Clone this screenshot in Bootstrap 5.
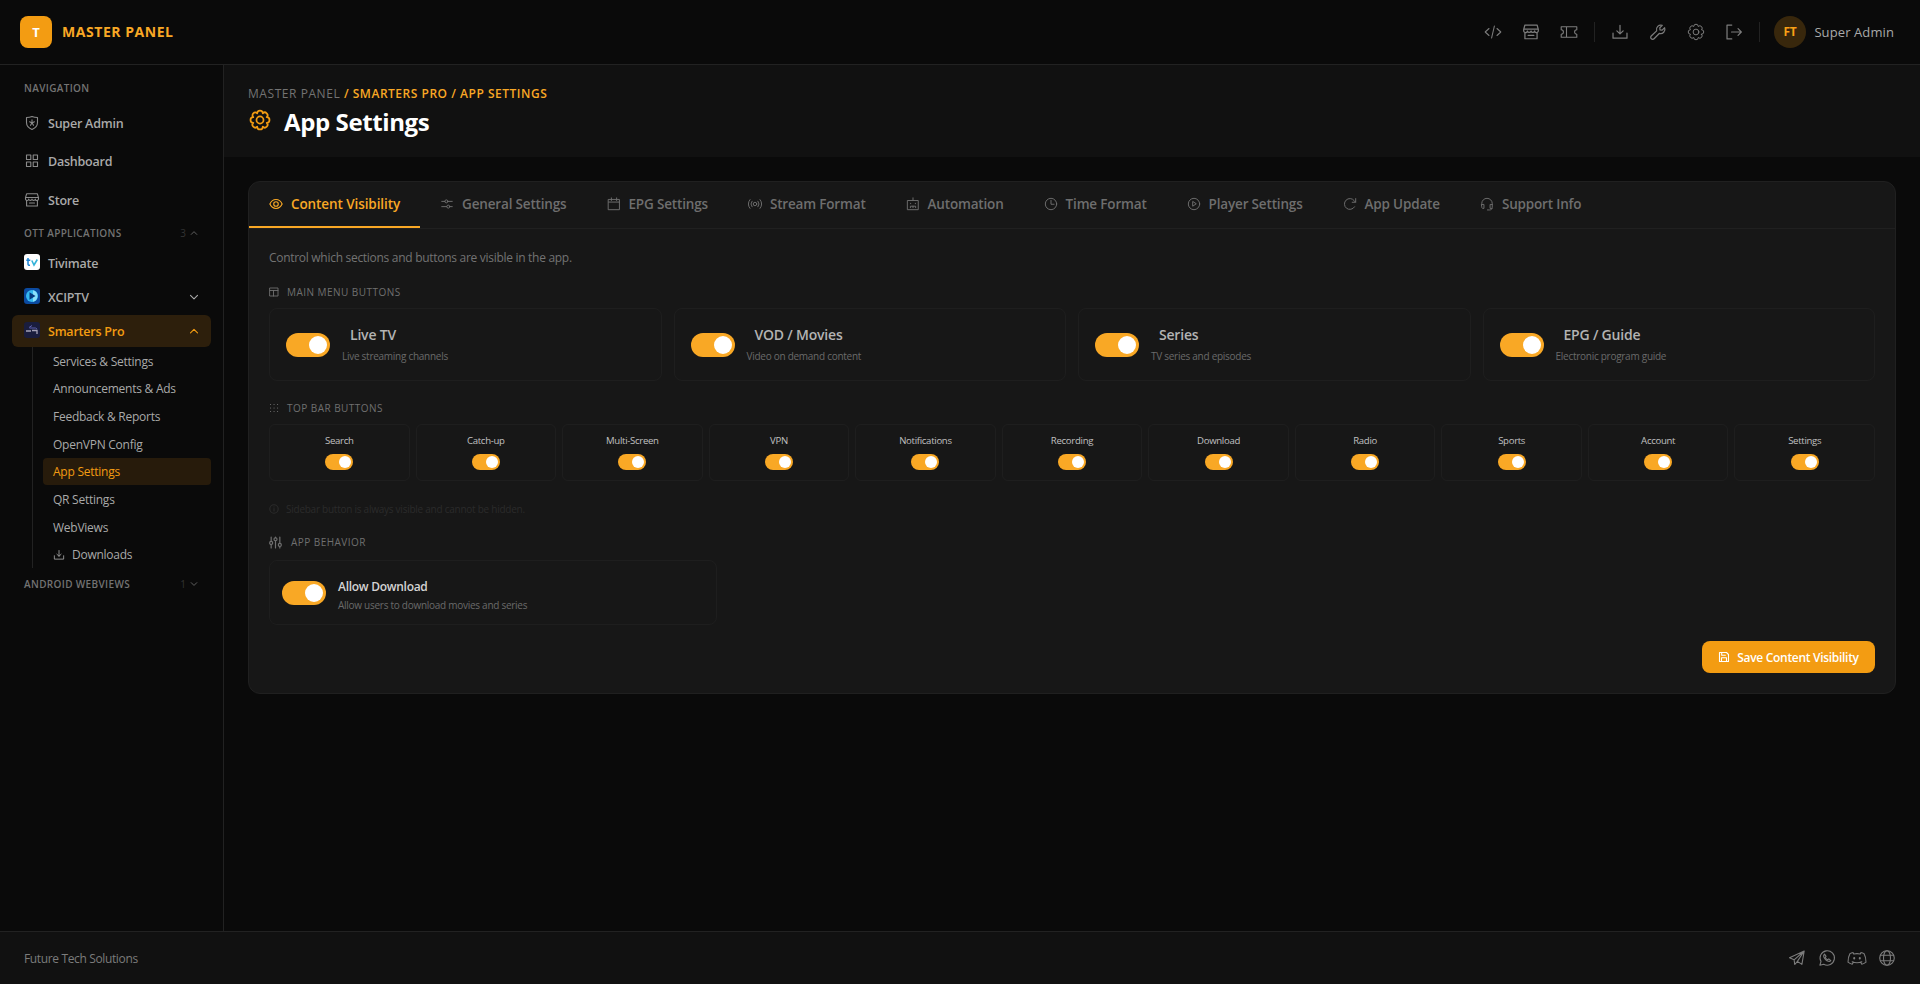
<!DOCTYPE html>
<html lang="en" data-bs-theme="dark">
<head>
<meta charset="utf-8">
<title>App Settings</title>
<link href="https://cdn.jsdelivr.net/npm/bootstrap@5.3.0/dist/css/bootstrap.min.css" rel="stylesheet">
<style>
body{background:#0a0a0a;color:#a9a9a9;font-family:"Open Sans","Noto Sans",sans-serif;font-size:13px;line-height:20px;height:984px;overflow:hidden}
a{color:inherit;text-decoration:none}
svg.ic{width:16px;height:16px;flex:none;fill:none;stroke:currentColor;stroke-width:1.1;stroke-linecap:round;stroke-linejoin:round}
.topbar{height:65px;border-bottom:1px solid #222;padding:0 26px 0 20px}
.logo{width:32px;height:32px;border-radius:8px;background:#f39c12;color:#fff;font-weight:700;font-size:13px}
.brand{font-weight:700;font-size:14px;color:#f9a825;margin-left:10px;letter-spacing:.55px}
.who{letter-spacing:.1px}
.tools{color:#7c7c7c}
.tools .ic{width:18px;height:18px;margin-right:20px}
.vr-line{width:1px;height:20px;background:#222}
.avatar{width:32px;height:32px;border-radius:50%;background:#38270c;color:#f9a016;font-weight:700;font-size:12px;letter-spacing:-.4px;margin:0 8px 0 14px;padding-right:1px}
.side{width:224px;border-right:1px solid #222;padding:0 12px;flex:none}
.head{font-size:10px;font-weight:600;color:#737373;letter-spacing:.35px;padding:0 12px}
.head .ic{width:8px;height:8px;margin:0 1px 0 4px;color:#6b6b6b}
.head .cnt{color:#333;font-weight:400;letter-spacing:0}
.nav-row{height:38.5px;padding:1px 12px 0;font-weight:600;gap:8px;font-size:12.5px;letter-spacing:-.22px}
.nav-row .ic{color:#8a8a8a;position:relative;top:-1px}
.app-row{height:32px;margin-bottom:2px;padding:2px 12px 0;font-weight:600;border-radius:6px;font-size:12.5px;letter-spacing:-.22px}
.app-row .chev{width:10px;height:10px;position:relative;top:-1px}
.app-row.on{background:#2d1f0c;color:#f39c12;margin:0}
.app-icon{width:16px;height:16px;margin-right:8px;flex:none;position:relative;top:-2px}
.sub{margin-left:20px;border-left:1px solid #222;padding-left:10px;width:179px}
.sub a{display:flex;align-items:center;height:27.625px;padding:2px 0 0 10px;font-size:12px;letter-spacing:-.25px;color:#868686;border-radius:4px}
.sub a.on{background:#271b0b;color:#f39c12}
.page-head{background:#111;height:92px;padding:0 24px}
.crumb{font-size:12px;font-weight:600;color:#f9a825;padding-top:19px;height:38px;line-height:20px;letter-spacing:.52px}
.crumb span{color:#737373;font-weight:400;letter-spacing:.56px}
h1{font-size:24px;font-weight:700;color:#fff;line-height:32px;margin:0 0 0 13px;letter-spacing:-.4px}
.page-title .ic{width:22px;height:22px;color:#f39c12;position:relative;top:-2px;margin-left:1px;stroke-width:1.6}
.panel{margin:24px 24px 0;height:513px;background:#171717;border:1px solid #202020;border-radius:12px;overflow:hidden}
.tabs{height:47px;border-bottom:1px solid #202020;font-size:13.5px;font-weight:600;color:#6e6e6e;letter-spacing:-.17px}
.tabs a{display:flex;align-items:center;height:46px;padding:0 20px;gap:8px;border-bottom:2px solid transparent}
.tabs a.on{color:#f9a825;border-color:#f9a825;letter-spacing:-.09px}
.tabs .ic{width:14px;height:14px}
.panel-body{padding:19px 20px 0}
.desc{font-size:12px;letter-spacing:-.29px;color:#737373;height:19px}
.sec{font-size:10px;line-height:14px;color:#6f6f6f;letter-spacing:.46px;gap:8px;font-weight:500}
.sec .ic{width:10px;height:10px}
.g4{display:grid;grid-template-columns:repeat(4,1fr);gap:12px}
.g11{display:grid;grid-template-columns:repeat(11,1fr);gap:6px}
.box{border:1px solid #1e1e1e;border-radius:8px}
.g4 .box{height:73px;padding:0 16px}
.tg{width:44px;height:24px;border-radius:12px;background:#f9a825;padding:3px;display:flex;justify-content:flex-end;flex:none}
.tg::after{content:"";width:18px;height:18px;border-radius:50%;background:#fff}
.tg.mini{width:28px;height:16px;padding:2px}
.tg.mini::after{width:12px;height:12px}
.lbl{font-size:14px;font-weight:600;color:#b3b3b3;line-height:20px;letter-spacing:-.2px}
.hint{font-size:10px;letter-spacing:-.27px;color:#6a6a6a;line-height:16px;margin-top:3px}
.g11 .box{height:57px;padding-top:8px;gap:5px;border-radius:6px;font-size:9.6px;font-weight:500;letter-spacing:-.3px;line-height:16px;color:#c0c0c0}
.note{font-size:10px;letter-spacing:-.25px;color:#2b2b2b;line-height:16px;gap:7px}
.low .lbl{font-size:12px;letter-spacing:-.28px;color:#d4d4d4;line-height:18px}
.low .hint{margin-top:1px}
.save,.save:hover{background:#f39c12;color:#fff;font-size:12px;letter-spacing:-.3px;font-weight:600;border:0;border-radius:8px;height:32px;width:173px;padding:2px 0 0;gap:7px}
.save .ic{width:12px;height:12px;position:relative;top:-1px}
.foot{height:53px;background:#111;border-top:1px solid #222;padding:1px 24px 0;font-size:12px;color:#7c7c7c}
.foot span{letter-spacing:-.36px}
.foot .ic{width:18px;height:18px;position:relative;top:-1px}
</style>
</head>
<body class="d-flex flex-column">
<svg width="0" height="0" class="position-absolute"><defs>
<symbol id="code" viewBox="0 0 18 18"><path d="M5 5.500 1.200 9 5 12.500M13 5.500 16.800 9 13 12.500M10.400 3 7.600 15"/></symbol>
<symbol id="store" viewBox="0 0 16 16"><path d="M2.600 1.800h10.800l1.100 3.800v1.200a1.600 1.600 0 0 1-3.200.3 1.700 1.700 0 0 1-3.300 0 1.700 1.700 0 0 1-3.300 0 1.600 1.600 0 0 1-3.200-.3V5.600zM2.600 8.600v5.400h10.800V8.600M1.700 5.500h12.600M5.500 11h5"/></symbol>
<symbol id="ticket" viewBox="0 0 18 18"><path d="M1.200 3.800h15.600v3a2.200 2.200 0 0 0 0 4.400v3H1.200v-3a2.200 2.200 0 0 0 0-4.400zM6.500 3.800v10.400"/></symbol>
<symbol id="download" viewBox="0 0 16 16"><path d="M1.800 9v4.500h12.400V9M8 2v7.500M5.200 7 8 9.700 10.800 7"/></symbol>
<symbol id="wrench" viewBox="0 0 16 16"><path d="M13.900 4.200 11.700 6.300 9.800 6.100 9.600 4.200 11.800 2.100A3.900 3.900 0 0 0 6.800 7L2 11.600a1.700 1.700 0 0 0 2.500 2.400L9.100 9.300a3.900 3.900 0 0 0 4.800-5.100z"/></symbol>
<symbol id="gear" viewBox="0 0 20 20"><circle cx="10" cy="10" r="3.200"/><path d="M16.100 12.530A2.500 2.500 0 0 1 12.530 16.100A2.500 2.500 0 0 1 7.470 16.100A2.500 2.500 0 0 1 3.900 12.530A2.500 2.500 0 0 1 3.900 7.470A2.500 2.500 0 0 1 7.470 3.900A2.500 2.500 0 0 1 12.530 3.900A2.500 2.500 0 0 1 16.100 7.470A2.500 2.500 0 0 1 16.100 12.530z"/></symbol>
<symbol id="logout" viewBox="0 0 16 16"><path d="M6 1.800H1.800v12.400H6M5.800 8h8.700M11.600 5 14.500 8l-2.900 3"/></symbol>
<symbol id="shield" viewBox="0 0 16 16"><path d="M8 1.500c2 .8 3.800 1 5.500 1v5c0 3.400-2 5.500-5.500 7-3.500-1.500-5.500-3.600-5.500-7v-5c1.700 0 3.500-.2 5.500-1zM8 4.900v3M5.600 6.700 8 7.900l2.400-1.200M6.500 10.300 8 7.900l1.500 2.400"/></symbol>
<symbol id="grid" viewBox="0 0 16 16"><path d="M2.500 2h4.300v4.500H2.500zM9.200 2h4.300v4.500H9.200zM2.500 9h4.300v4.500H2.500zM9.200 9h4.300v4.500H9.200z"/></symbol>
<symbol id="up" viewBox="0 0 10 10"><path d="M1.500 6.800 5 3.300l3.500 3.500"/></symbol>
<symbol id="down" viewBox="0 0 10 10"><path d="M1.500 3.300 5 6.800l3.500-3.500"/></symbol>
<symbol id="eye" viewBox="0 0 16 16"><path d="M1 8c3-6.800 11-6.800 14 0-3 6.800-11 6.800-14 0z" stroke-width="1.300"/><circle cx="8" cy="8" r="2.600" stroke-width="1.300"/></symbol>
<symbol id="sliders" viewBox="0 0 16 16"><path d="M2 5h3.500M9 5h5M2 11h5.500M11.500 11h2.500"/><circle cx="7.300" cy="5" r="1.700"/><circle cx="9.500" cy="11" r="1.700"/></symbol>
<symbol id="cal" viewBox="0 0 16 16"><path d="M1.800 2.800h12.400v11.700H1.800zM1.800 5.800h12.400M5 1v3M11 1v3"/></symbol>
<symbol id="stream" viewBox="0 0 16 16"><circle cx="8" cy="8" r="2"/><path d="M4.600 4.800a5 5 0 0 0 0 6.400M11.400 4.800a5 5 0 0 1 0 6.400M2.300 3a8 8 0 0 0 0 10M13.700 3a8 8 0 0 1 0 10"/></symbol>
<symbol id="robot" viewBox="0 0 16 16"><path d="M2 4h12v10.500H2zM8 1v3M5 12.200V10.500h6v1.700M8 10.500v1.700M5.300 7.200v.5M10.700 7.200v.5"/></symbol>
<symbol id="clock" viewBox="0 0 16 16"><circle cx="8" cy="8" r="6.500"/><path d="M8 3.800V8.300h3.500"/></symbol>
<symbol id="play" viewBox="0 0 16 16"><circle cx="8" cy="8" r="6.500"/><path d="M6.500 5.500v5L10.200 8z"/></symbol>
<symbol id="reload" viewBox="0 0 16 16"><path d="M13.200 11.200A6.200 6.200 0 1 1 12.800 4.200L14.200 5.800M14.500 1.800v4.200h-4"/></symbol>
<symbol id="headset" viewBox="0 0 16 16"><path d="M2 9V7.500a6 6 0 0 1 12 0V12c0 2-1.500 2.800-3 2.800H8.500M2 8.500h2.500V13H3.300C2.500 13 2 12.500 2 11.700zM14 8.500h-2.500V13h2"/></symbol>
<symbol id="layout" viewBox="0 0 10 10"><path d="M1 1h8v8H1zM1 3.500h8M4.500 3.500V9" stroke-width=".9"/></symbol>
<symbol id="dots" viewBox="0 0 10 10"><path d="M1.500 1.500h.1M5 1.500h.1M8.500 1.500h.1M1.500 5h.1M5 5h.1M8.500 5h.1M1.500 8.500h.1M5 8.500h.1M8.500 8.500h.1"/></symbol>
<symbol id="info" viewBox="0 0 10 10"><circle cx="5" cy="5" r="4.200"/><path d="M5 4.500v2.500M5 2.900v.1"/></symbol>
<symbol id="vsl" viewBox="0 0 12 12"><path d="M2 1v3.800M2 8v3M6 1v.7M6 4.500V11M10 1v5.500M10 9.800v1.200"/><circle cx="2" cy="6.400" r="1.400"/><circle cx="6" cy="3" r="1.400"/><circle cx="10" cy="8.200" r="1.400"/></symbol>
<symbol id="save" viewBox="0 0 12 12"><path d="M1.500 1.500h7L10.500 3.500v7h-9zM3.500 10.500v-3.800h5v3.800M3.700 1.800v2.400h3.600"/></symbol>
<symbol id="plane" viewBox="0 0 18 18"><path d="M1.500 8.800 16.200 2l-2.300 13.400-4.500-3-2.600 3.100-.7-4.700zM6.100 10.800 16.200 2 9.400 12.400"/></symbol>
<symbol id="wa" viewBox="0 0 18 18"><path d="M1.900 16.200 3 12.500A7.200 7.200 0 1 1 5.700 15.200z"/><path d="M6.500 5.200c-1.600 1.200-.8 3.600 1 5.400s4.100 2.500 5.300 1l-2-1.700-1.200.8c-1-.4-1.900-1.300-2.300-2.300l.8-1.100z"/></symbol>
<symbol id="discord" viewBox="0 0 20 18"><path d="M6 3.500C4.800 3.700 3.800 4.100 3 4.600 1.600 7.200 1 9.800 1 13.200c1.300 1.100 2.700 1.700 4.200 2l1.200-2M14 3.500c1.200.2 2.200.6 3 1.100 1.400 2.600 2 5.200 2 8.600-1.300 1.100-2.700 1.700-4.200 2l-1.200-2M6 3.500 6.700 5c2.200-.5 4.400-.5 6.600 0L14 3.500M5.200 12.700c3 1.300 6.600 1.300 9.600 0"/><path d="M7.200 9v.6M12.800 9v.6" stroke-width="2"/></symbol>
<symbol id="globe" viewBox="0 0 18 18"><circle cx="9" cy="9" r="7.300"/><ellipse cx="9" cy="9" rx="3.500" ry="7.300"/><path d="M2.500 6.300h13M2.500 11.700h13"/></symbol>
</defs></svg>

<header class="topbar d-flex align-items-center">
  <div class="logo d-flex align-items-center justify-content-center">T</div>
  <div class="brand">MASTER PANEL</div>
  <div class="tools d-flex align-items-center ms-auto">
    <svg class="ic"><use href="#code"/></svg><svg class="ic"><use href="#store"/></svg><svg class="ic me-3"><use href="#ticket"/></svg>
    <div class="vr-line me-3"></div>
    <svg class="ic"><use href="#download"/></svg><svg class="ic"><use href="#wrench"/></svg><svg class="ic"><use href="#gear"/></svg><svg class="ic me-3"><use href="#logout"/></svg>
    <div class="vr-line"></div>
  </div>
  <div class="avatar d-flex align-items-center justify-content-center">FT</div>
  <div class="who">Super Admin</div>
</header>

<div class="d-flex flex-grow-1" style="min-height:0">
  <nav class="side">
    <div class="head d-flex align-items-center" style="height:39px;padding-top:7px">NAVIGATION</div>
    <a class="nav-row d-flex align-items-center"><svg class="ic"><use href="#shield"/></svg>Super Admin</a>
    <a class="nav-row d-flex align-items-center"><svg class="ic"><use href="#grid"/></svg>Dashboard</a>
    <a class="nav-row d-flex align-items-center"><svg class="ic"><use href="#store"/></svg>Store</a>
    <div class="head d-flex align-items-center" style="height:27.5px">OTT APPLICATIONS<span class="cnt ms-auto">3</span><svg class="ic"><use href="#up"/></svg></div>
    <a class="app-row d-flex align-items-center"><svg class="app-icon" viewBox="0 0 16 16"><rect width="16" height="16" rx="3" fill="#fff"/><path d="M4 4v6q0 1.500 2 1.300M2.300 6.200H6.300" stroke="#1b84d6" stroke-width="1.500" fill="none"/><path d="M7.800 6.500 10 11 13.300 5.500" stroke="#35b3d9" stroke-width="1.600" fill="none"/></svg>Tivimate</a>
    <a class="app-row d-flex align-items-center"><svg class="app-icon" viewBox="0 0 16 16"><rect width="16" height="16" rx="3" fill="#0b4aa0"/><circle cx="8" cy="8" r="6" fill="#35b9f0"/><path d="M9 2.200a6 6 0 0 1 0 11.600z" fill="#8be0fb"/><path d="M5.500 4.200v7.600L11.500 8z" fill="#073a7f"/></svg>XCIPTV<svg class="ic chev ms-auto"><use href="#down"/></svg></a>
    <a class="app-row on d-flex align-items-center"><svg class="app-icon" viewBox="0 0 16 16"><rect width="16" height="16" rx="3" fill="#1a1d3d"/><path d="M5 5.500 8 3.500M5.500 6h6l1.500 1" stroke="#5d5fae" fill="none"/><path d="M2 9h5M8 8.500h5v3.500" stroke="#a5a2b8" stroke-width="1.300" fill="none"/></svg>Smarters Pro<svg class="ic chev ms-auto"><use href="#up"/></svg></a>
    <div class="sub">
      <a>Services &amp; Settings</a><a>Announcements &amp; Ads</a><a>Feedback &amp; Reports</a><a>OpenVPN Config</a><a class="on">App Settings</a><a>QR Settings</a><a>WebViews</a><a><svg class="ic" style="width:12px;height:12px;margin-right:7px"><use href="#download"/></svg>Downloads</a>
    </div>
    <div class="head d-flex align-items-center" style="height:31px">ANDROID WEBVIEWS<span class="cnt ms-auto">1</span><svg class="ic"><use href="#down"/></svg></div>
  </nav>

  <main class="flex-grow-1">
    <div class="page-head">
      <div class="crumb"><span>MASTER PANEL</span> / SMARTERS PRO / APP SETTINGS</div>
      <div class="page-title d-flex align-items-center" style="height:38px"><svg class="ic"><use href="#gear"/></svg><h1>App Settings</h1></div>
    </div>
    <section class="panel">
      <div class="tabs d-flex">
        <a class="on"><svg class="ic"><use href="#eye"/></svg>Content Visibility</a>
        <a><svg class="ic"><use href="#sliders"/></svg>General Settings</a>
        <a><svg class="ic"><use href="#cal"/></svg>EPG Settings</a>
        <a><svg class="ic"><use href="#stream"/></svg>Stream Format</a>
        <a><svg class="ic"><use href="#robot"/></svg>Automation</a>
        <a><svg class="ic"><use href="#clock"/></svg>Time Format</a>
        <a><svg class="ic"><use href="#play"/></svg>Player Settings</a>
        <a><svg class="ic"><use href="#reload"/></svg>App Update</a>
        <a><svg class="ic"><use href="#headset"/></svg>Support Info</a>
      </div>
      <div class="panel-body">
        <div class="desc">Control which sections and buttons are visible in the app.</div>
        <div class="sec d-flex align-items-center" style="margin:18px 0 9px"><svg class="ic"><use href="#layout"/></svg>MAIN MENU BUTTONS</div>
        <div class="g4">
          <div class="box d-flex align-items-center"><span class="tg"></span><div style="margin-left:12px"><div class="lbl ps-2">Live TV</div><div class="hint">Live streaming channels</div></div></div>
          <div class="box d-flex align-items-center"><span class="tg"></span><div style="margin-left:12px"><div class="lbl ps-2">VOD / Movies</div><div class="hint">Video on demand content</div></div></div>
          <div class="box d-flex align-items-center"><span class="tg"></span><div style="margin-left:12px"><div class="lbl ps-2">Series</div><div class="hint">TV series and episodes</div></div></div>
          <div class="box d-flex align-items-center"><span class="tg"></span><div style="margin-left:12px"><div class="lbl ps-2">EPG / Guide</div><div class="hint">Electronic program guide</div></div></div>
        </div>
        <div class="sec d-flex align-items-center" style="margin:20px 0 9px"><svg class="ic"><use href="#dots"/></svg>TOP BAR BUTTONS</div>
        <div class="g11">
          <div class="box d-flex flex-column align-items-center">Search<span class="tg mini"></span></div>
          <div class="box d-flex flex-column align-items-center">Catch-up<span class="tg mini"></span></div>
          <div class="box d-flex flex-column align-items-center">Multi-Screen<span class="tg mini"></span></div>
          <div class="box d-flex flex-column align-items-center">VPN<span class="tg mini"></span></div>
          <div class="box d-flex flex-column align-items-center">Notifications<span class="tg mini"></span></div>
          <div class="box d-flex flex-column align-items-center">Recording<span class="tg mini"></span></div>
          <div class="box d-flex flex-column align-items-center">Download<span class="tg mini"></span></div>
          <div class="box d-flex flex-column align-items-center">Radio<span class="tg mini"></span></div>
          <div class="box d-flex flex-column align-items-center">Sports<span class="tg mini"></span></div>
          <div class="box d-flex flex-column align-items-center">Account<span class="tg mini"></span></div>
          <div class="box d-flex flex-column align-items-center">Settings<span class="tg mini"></span></div>
        </div>
        <div class="note d-flex align-items-center" style="margin-top:20px"><svg class="ic" style="width:10px;height:10px"><use href="#info"/></svg>Sidebar button is always visible and cannot be hidden.</div>
        <div class="sec d-flex align-items-center" style="margin:18px 0 11px;gap:9px"><svg class="ic" style="width:13px;height:13px"><use href="#vsl"/></svg>APP BEHAVIOR</div>
        <div class="box low d-flex align-items-center" style="width:448px;height:65px;padding:0 12px"><span class="tg"></span><div style="margin-left:12px;padding-top:5px"><div class="lbl">Allow Download</div><div class="hint">Allow users to download movies and series</div></div></div>
        <button class="btn save d-flex align-items-center justify-content-center ms-auto mt-3"><svg class="ic"><use href="#save"/></svg>Save Content Visibility</button>
      </div>
    </section>
  </main>
</div>
<footer class="foot d-flex align-items-center"><span>Future Tech Solutions</span>
  <div class="d-flex align-items-center ms-auto" style="gap:11.2px"><svg class="ic"><use href="#plane"/></svg><svg class="ic"><use href="#wa"/></svg><svg class="ic" style="width:20px"><use href="#discord"/></svg><svg class="ic"><use href="#globe"/></svg></div>
</footer>
<script src="https://cdn.jsdelivr.net/npm/bootstrap@5.3.0/dist/js/bootstrap.bundle.min.js"></script>
</body>
</html>
